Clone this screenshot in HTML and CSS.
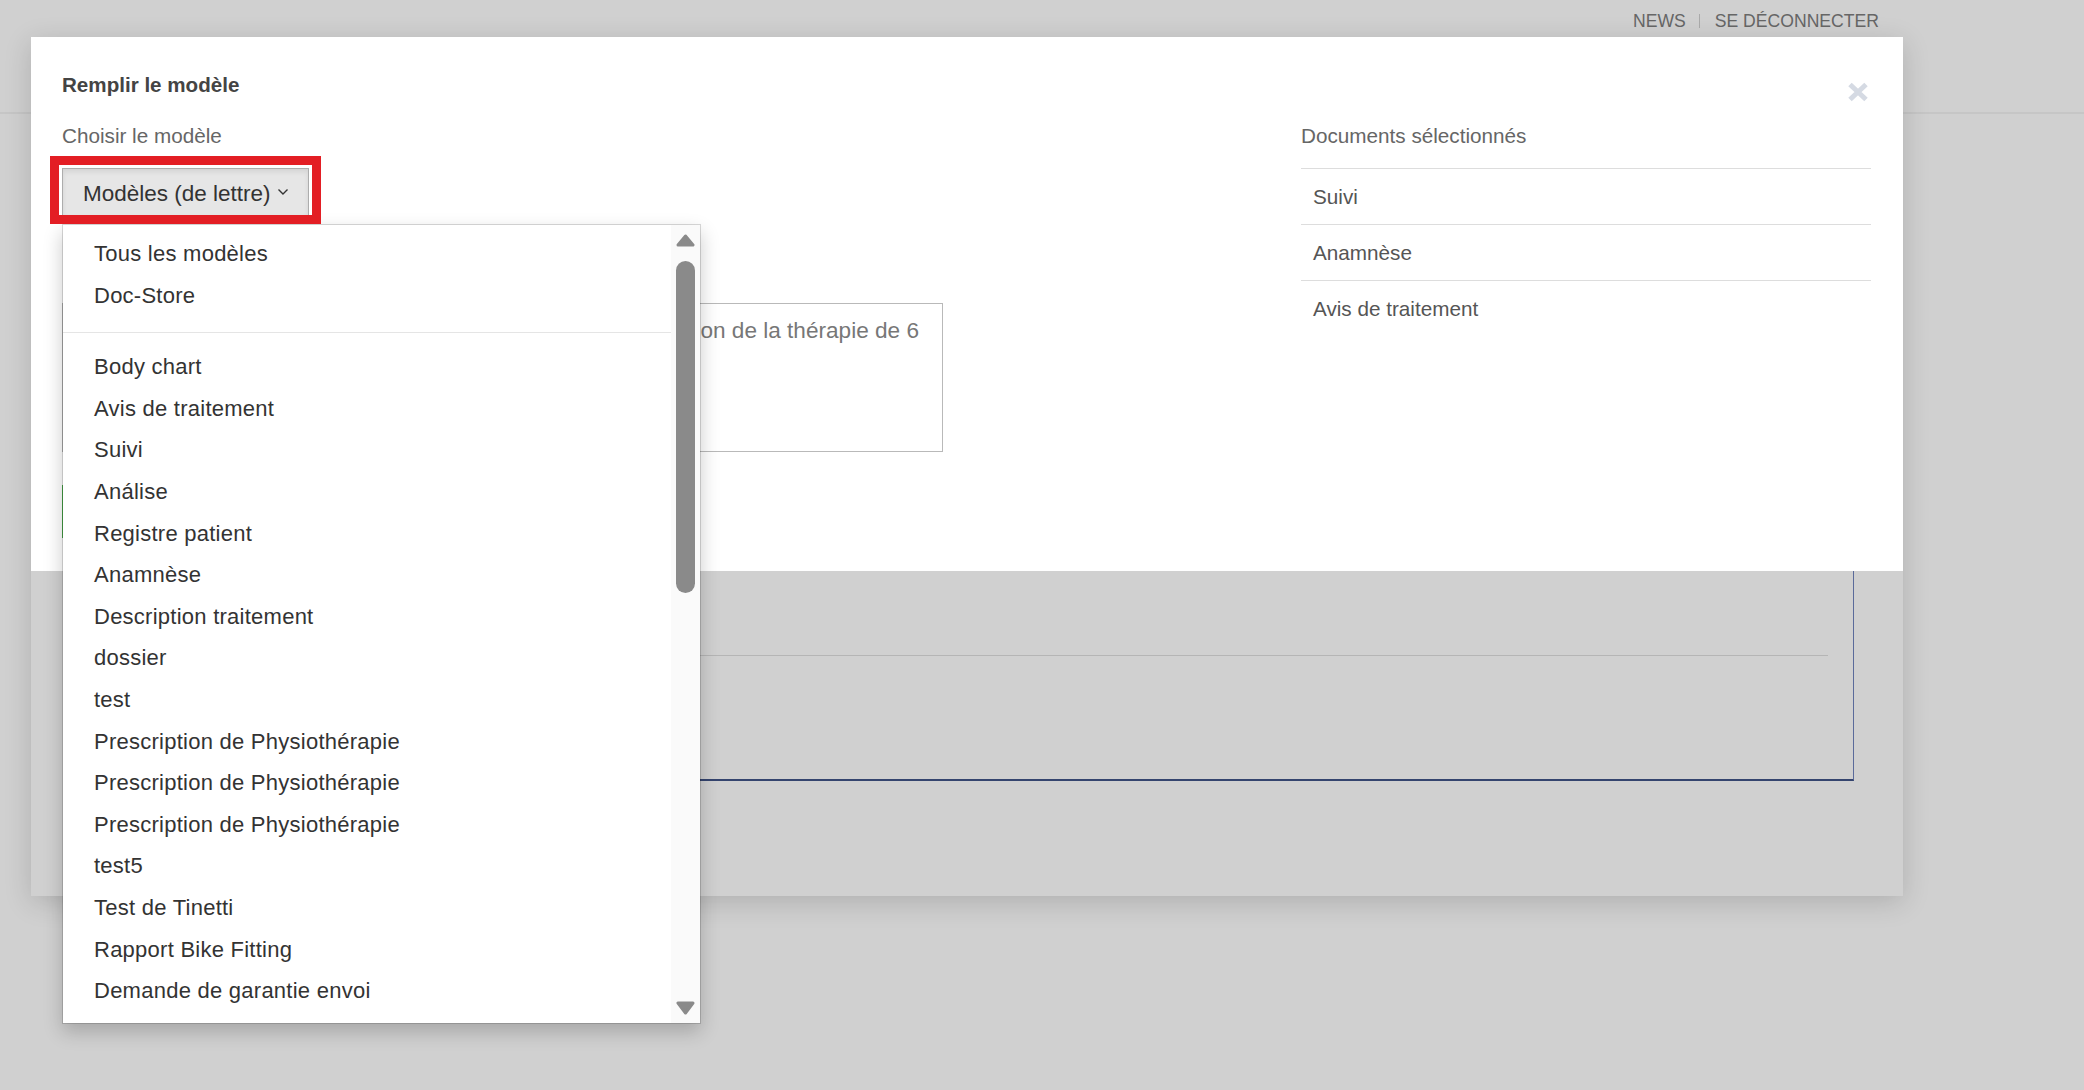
FILE: index.html
```html
<!DOCTYPE html>
<html lang="fr">
<head>
    <meta charset="UTF-8">
    <meta name="viewport" content="width=device-width, initial-scale=1.0">
    <title>Remplir le modèle</title>
    <link rel="stylesheet" href="styles.css">
</head>
<body>
    <div class="topbar">
        <nav class="top-links">
            <a href="#">NEWS</a>
            <span class="sep"></span>
            <a href="#">SE DÉCONNECTER</a>
        </nav>
    </div>

    <div class="modal">
        <div class="modal-top">
            <div class="modal-header">
                <h4 class="modal-title">Remplir le modèle</h4>
                <button class="close" aria-label="Fermer">
                    <svg width="22" height="20" viewBox="0 0 22 20">
                        <path d="M3 2.5 L19 17.5 M19 2.5 L3 17.5" stroke="#d5dae3" stroke-width="5" stroke-linecap="butt"/>
                    </svg>
                </button>
            </div>

            <div class="modal-body">
                <div class="col-left">
                    <div class="field-label">Choisir le modèle</div>

                    <div class="picker">
                        <button class="btn-toggle">
                            <span>Modèles (de lettre)</span>
                            <svg class="caret" width="12" height="8" viewBox="0 0 12 8">
                                <path d="M1.5 1.5 L6 6 L10.5 1.5" fill="none" stroke="#333" stroke-width="1.4"/>
                            </svg>
                        </button>
                        <div class="highlight"></div>

                        <div class="menu">
                            <ul class="menu-list">
                                <li>Tous les modèles</li>
                                <li>Doc-Store</li>
                                <li class="divider"></li>
                                <li>Body chart</li>
                                <li>Avis de traitement</li>
                                <li>Suivi</li>
                                <li>Análise</li>
                                <li>Registre patient</li>
                                <li>Anamnèse</li>
                                <li>Description traitement</li>
                                <li>dossier</li>
                                <li>test</li>
                                <li>Prescription de Physiothérapie</li>
                                <li>Prescription de Physiothérapie</li>
                                <li>Prescription de Physiothérapie</li>
                                <li>test5</li>
                                <li>Test de Tinetti</li>
                                <li>Rapport Bike Fitting</li>
                                <li>Demande de garantie envoi</li>
                            </ul>
                            <div class="scrollbar">
                                <svg class="arrow" width="19" height="13" viewBox="0 0 19 13">
                                    <polygon points="9.5,2 17,11 2,11" fill="#8a8a8a" stroke="#8a8a8a" stroke-width="3" stroke-linejoin="round"/>
                                </svg>
                                <div class="thumb"></div>
                                <div class="track-rest"></div>
                                <svg class="arrow" width="19" height="14" viewBox="0 0 19 14">
                                    <polygon points="2,2 17,2 9.5,12" fill="#8a8a8a" stroke="#8a8a8a" stroke-width="3" stroke-linejoin="round"/>
                                </svg>
                            </div>
                        </div>
                    </div>

                    <div class="note">
                        <div class="note-line">Demande de prolongation de la thérapie de 6</div>
                    </div>

                    <button class="btn-green">Générer</button>
                </div>

                <div class="col-right">
                    <div class="field-label">Documents sélectionnés</div>
                    <ul class="doc-list">
                        <li>Suivi</li>
                        <li>Anamnèse</li>
                        <li>Avis de traitement</li>
                    </ul>
                </div>
            </div>
        </div>

        <div class="modal-lower">
            <div class="preview">
                <div class="preview-rule"></div>
            </div>
        </div>
    </div>
</body>
</html>
```

FILE: styles.css
```css
body {
    margin: 0;
    width: 2084px;
    height: 1090px;
    overflow: hidden;
    position: relative;
    font-family: "Liberation Sans", Arial, sans-serif;
    background-color: #d0d0d0;
    color: #333;
}

ul {
    list-style: none;
    margin: 0;
    padding: 0;
}

button {
    font-family: inherit;
}

/* page header, dimmed behind the dialog */
.topbar {
    height: 112px;
    border-bottom: 2px solid #c6c6c6;
}

.top-links {
    display: flex;
    justify-content: flex-end;
    align-items: center;
    padding: 11px 205px 0 0;
    line-height: 20px;
    font-size: 17.6px;
}

.top-links a {
    color: #666;
    text-decoration: none;
}

.top-links .sep {
    width: 1px;
    height: 14px;
    background-color: #aaa;
    margin: 0 15px 0 13px;
}

/* dialog */
.modal {
    position: absolute;
    left: 31px;
    top: 37px;
    width: 1872px;
    height: 859px;
    background-color: #d0d0d0;
    box-shadow: 0 6px 26px rgba(0,0,0,0.16);
}

.modal-top {
    height: 534px;
    box-sizing: border-box;
    padding: 36px 32px 0 31px;
    background-color: #fff;
}

.modal-header {
    display: flex;
    justify-content: space-between;
    align-items: flex-start;
}

.modal-title {
    margin: 0;
    font-size: 20.6px;
    line-height: 24px;
    font-weight: bold;
    color: #444;
}

.close {
    margin: 9px 2px 0 0;
    padding: 0;
    border: none;
    background: none;
    line-height: 0;
}

.modal-body {
    display: flex;
    justify-content: space-between;
    margin-top: 22px;
}

.field-label {
    font-size: 20.7px;
    line-height: 24px;
    color: #666;
}

.col-left {
    width: 881px;
}

.col-right {
    width: 570px;
}

/* template picker */
.picker {
    position: relative;
    margin-top: 20px;
    height: 48px;
}

.btn-toggle {
    display: flex;
    align-items: center;
    width: 247px;
    height: 48px;
    box-sizing: border-box;
    padding: 3px 0 0 20px;
    font-size: 22.5px;
    white-space: nowrap;
    color: #333;
    background-color: #e6e6e6;
    border: 1px solid #adadad;
    box-shadow: inset 0 3px 5px rgba(0,0,0,0.08);
}

.btn-toggle .caret {
    flex: none;
    margin-left: 6px;
    margin-top: -3px;
}

.highlight {
    position: absolute;
    left: -12px;
    top: -12px;
    width: 271px;
    height: 68px;
    box-sizing: border-box;
    border: 9px solid #e31e24;
    pointer-events: none;
    z-index: 11;
}

.menu {
    position: absolute;
    left: 0;
    top: 56px;
    width: 639px;
    height: 800px;
    box-sizing: border-box;
    display: flex;
    background-color: #fff;
    background-clip: padding-box;
    border: 1px solid rgba(0,0,0,0.15);
    box-shadow: 0 8px 18px rgba(0,0,0,0.2);
    overflow: hidden;
    z-index: 10;
}

.menu-list {
    flex: 1;
    padding-top: 8px;
}

.menu-list li {
    padding-left: 31px;
    font-size: 22px;
    letter-spacing: 0.25px;
    line-height: 41.6px;
    color: #333;
    white-space: nowrap;
}

.menu-list .divider {
    height: 1px;
    padding: 0;
    margin: 16px 0 13px;
    background-color: #e5e5e5;
}

.scrollbar {
    width: 29px;
    display: flex;
    flex-direction: column;
    padding: 9px 0 8px 5px;
    box-sizing: border-box;
    background-color: #fafafa;
}

.scrollbar .arrow {
    display: block;
}

.thumb {
    width: 19px;
    height: 332px;
    margin-top: 14px;
    border-radius: 10px;
    background-color: #8a8a8a;
}

.track-rest {
    flex: 1;
}

/* message preview behind the menu */
.note {
    margin-top: 87px;
    height: 149px;
    box-sizing: border-box;
    border: 1px solid #b9b9b9;
    padding: 12px 23px 0 16px;
    font-size: 22.6px;
    line-height: 30px;
    color: #777;
}

.note-line {
    text-align: right;
    white-space: nowrap;
}

.btn-green {
    display: block;
    margin-top: 33px;
    width: 220px;
    height: 53px;
    border: 1px solid #4cae4c;
    background-color: #5cb85c;
    color: #fff;
    font-size: 20px;
}

/* selected documents */
.doc-list {
    margin-top: 20px;
}

.doc-list li {
    border-top: 1px solid #ddd;
    padding-left: 12px;
    font-size: 20.7px;
    line-height: 55px;
    color: #555;
}

/* lower part of the dialog */
.modal-lower {
    height: 325px;
    padding: 0 49px;
}

.preview {
    height: 208px;
    border-right: 1px solid #5a6a9a;
    border-bottom: 2px solid #34446e;
    position: relative;
}

.preview-rule {
    position: absolute;
    left: 25px;
    right: 25px;
    top: 84px;
    height: 1px;
    background-color: #b5b5b5;
}
```
